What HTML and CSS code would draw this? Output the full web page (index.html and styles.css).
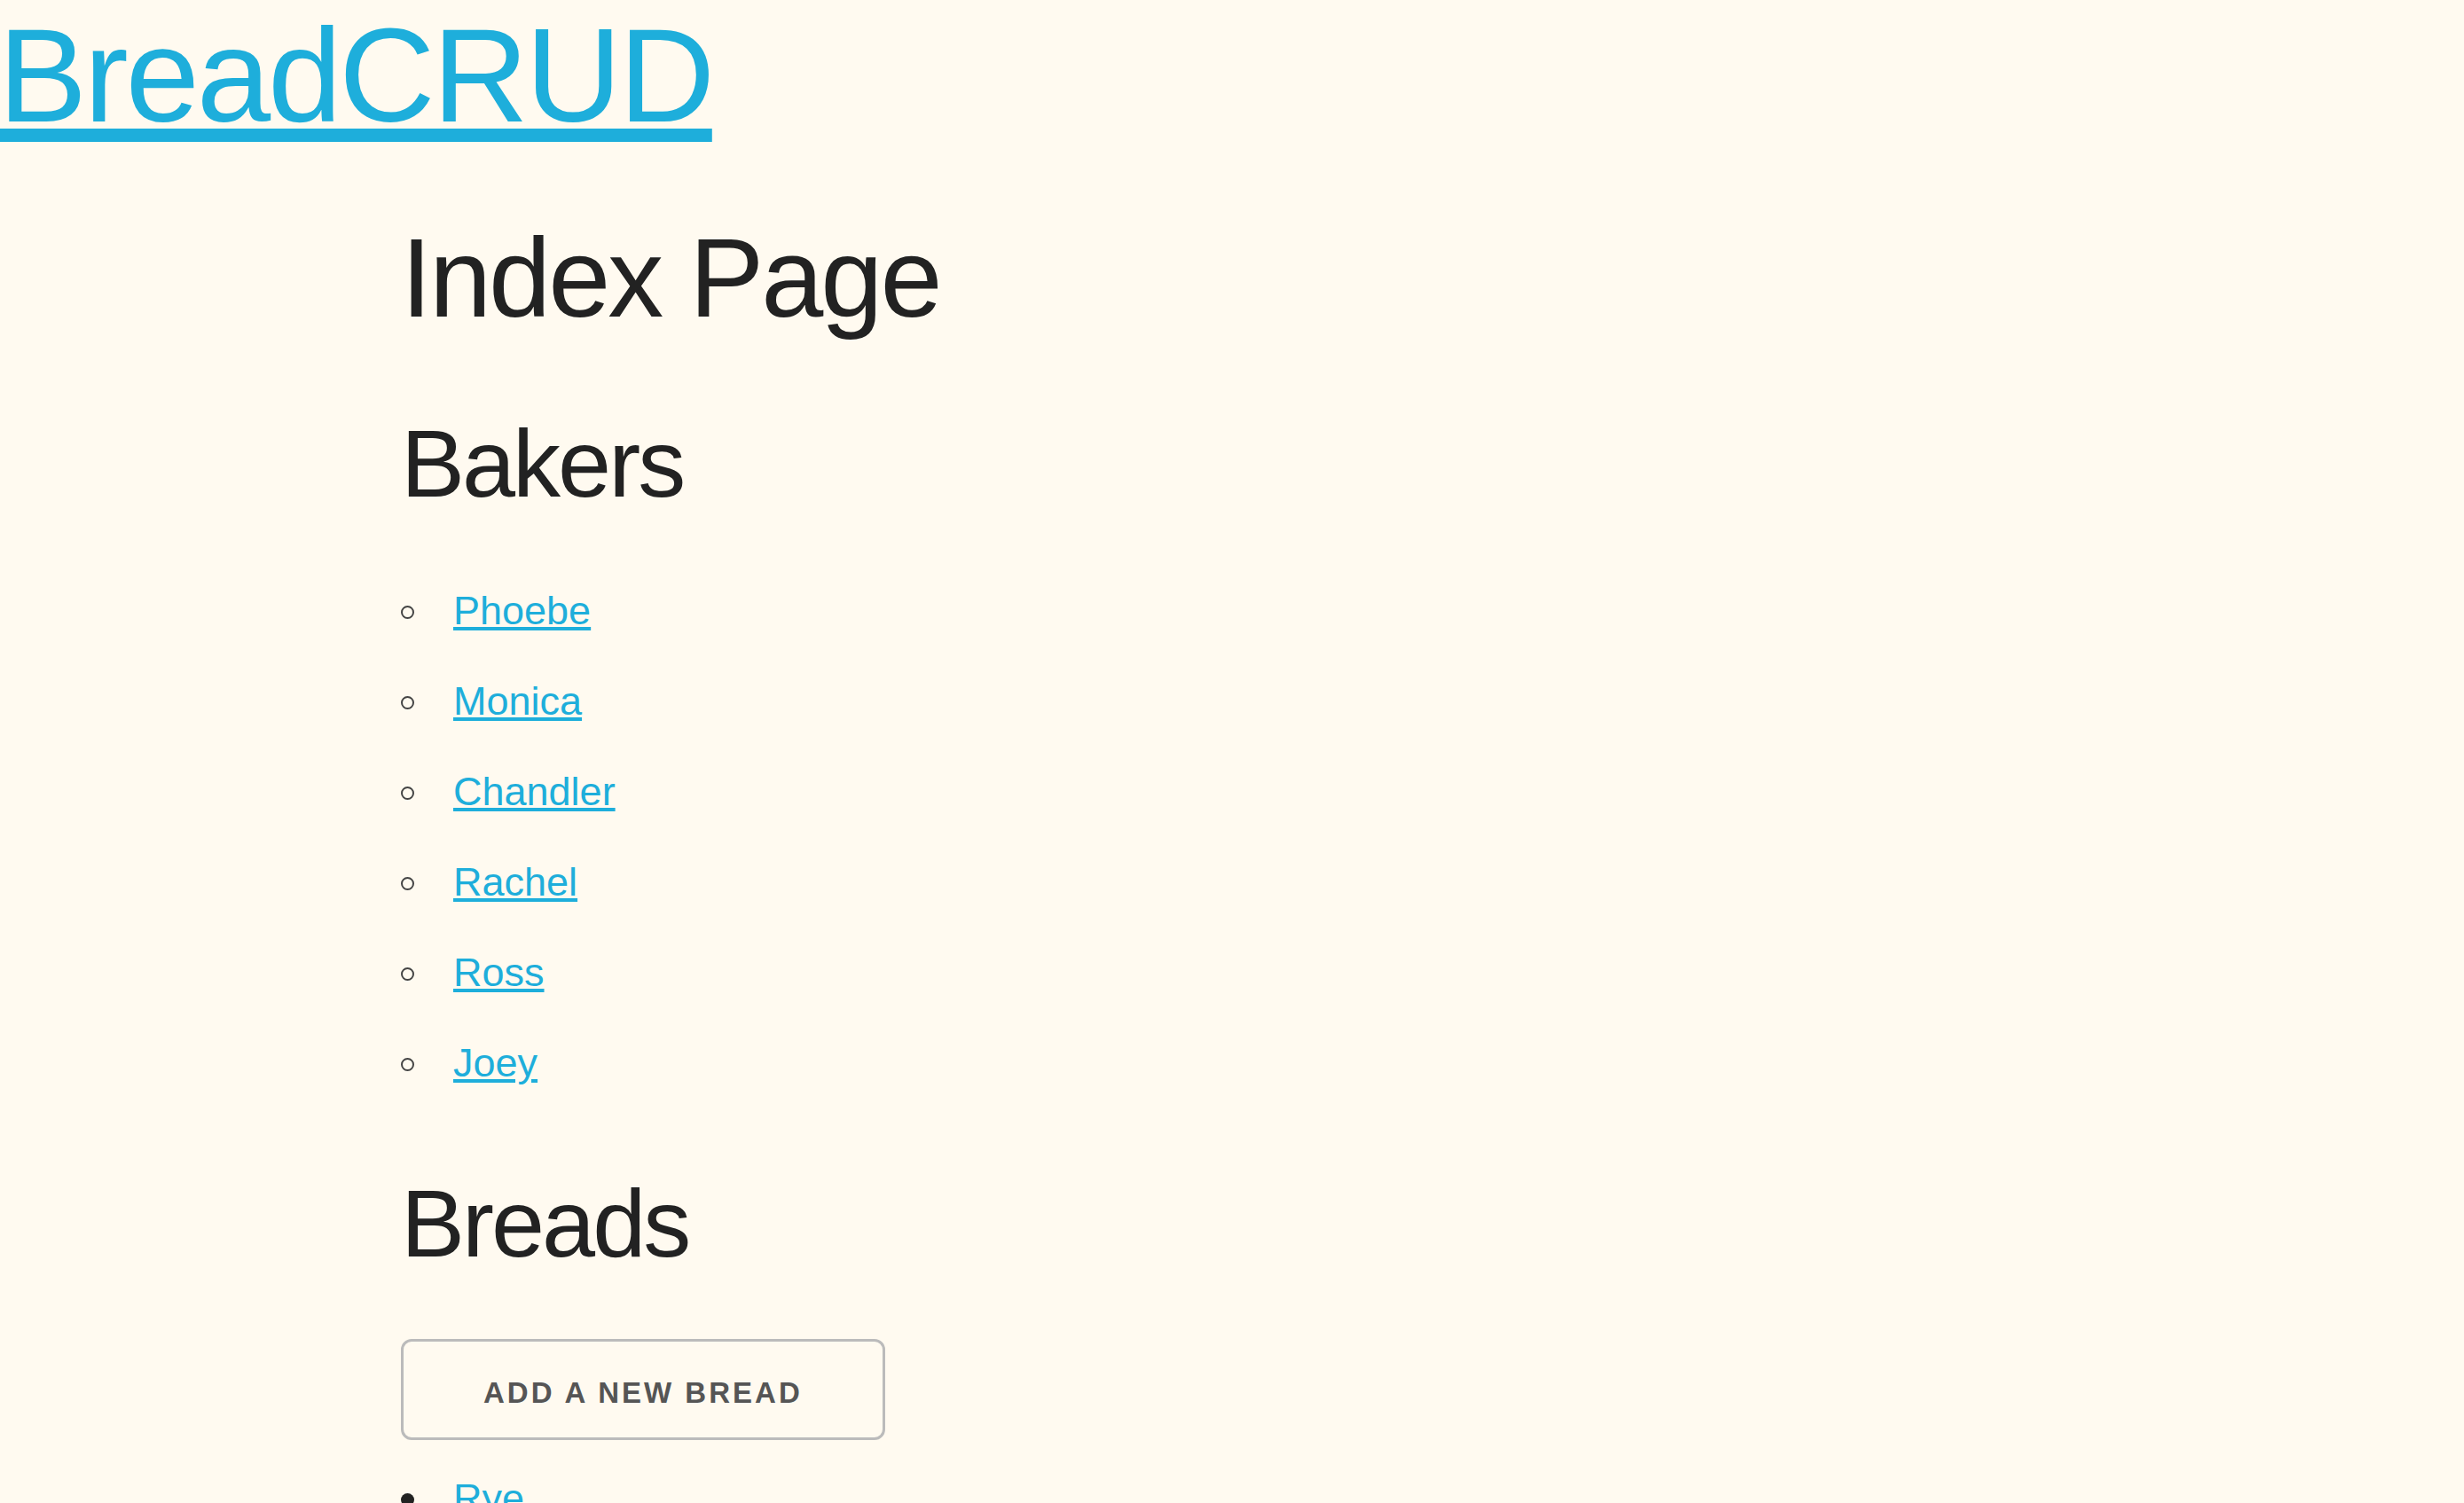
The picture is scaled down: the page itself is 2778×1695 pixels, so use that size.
FILE: index.html
```html
<!DOCTYPE html>
<html lang="en">
<head>
<meta charset="utf-8">
<title>BreadCRUD</title>
<link rel="stylesheet" href="styles.css">
</head>
<body>
<header class="site-header">
  <h1 class="brand"><a class="brand-link" href="/">BreadCRUD</a></h1>
</header>
<main class="page">
  <h2 class="page-title">Index Page</h2>

  <h3 class="section-title">Bakers</h3>
  <ul class="item-list item-list--circle">
    <li class="item"><a class="item-link" href="#">Phoebe</a></li>
    <li class="item"><a class="item-link" href="#">Monica</a></li>
    <li class="item"><a class="item-link" href="#">Chandler</a></li>
    <li class="item"><a class="item-link" href="#">Rachel</a></li>
    <li class="item"><a class="item-link" href="#">Ross</a></li>
    <li class="item"><a class="item-link" href="#">Joey</a></li>
  </ul>

  <h3 class="section-title">Breads</h3>
  <a class="button" href="#">Add a New Bread</a>
  <ul class="item-list item-list--disc">
    <li class="item"><a class="item-link" href="#">Rye</a></li>
  </ul>
</main>
</body>
</html>
```
FILE: styles.css
```css
html {
  font-size: 30px;
}

body {
  margin: 0;
  background: #fffaf0;
  color: #222222;
  font-family: "Liberation Sans", Arial, sans-serif;
  font-size: 45px;
  line-height: 1.6;
  font-weight: 400;
}

a {
  color: #1eaedb;
}

.site-header {
  margin-top: -5px;
}

.brand {
  margin: 0 0 60px -2px;
  font-size: 150px;
  line-height: 1.2;
  font-weight: 300;
  letter-spacing: -3.2px;
}

.brand-link {
  text-decoration-thickness: 15px;
  text-underline-offset: 8px;
}

.page {
  padding-left: 452px;
}

.page-title {
  margin: 0 0 60px 0;
  font-size: 126px;
  line-height: 1.25;
  font-weight: 300;
  letter-spacing: -3px;
}

.section-title {
  margin: 0 0 60px 0;
  font-size: 108px;
  line-height: 1.3;
  font-weight: 300;
  letter-spacing: -3px;
}

.item-list {
  margin: 0 0 75px 0;
  padding-left: 0;
  list-style: none;
}

.item {
  margin-bottom: 30px;
}

.item::before {
  content: "";
  display: inline-block;
  box-sizing: border-box;
  width: 15px;
  height: 15px;
  margin-right: 44px;
  margin-bottom: 4px;
  border-radius: 50%;
  vertical-align: middle;
}

.item-list--circle .item::before {
  border: 2px solid #444444;
}

.item-list--disc .item::before {
  background: #222222;
}

.item-link {
  text-decoration-thickness: 4px;
  text-underline-offset: 3px;
}

.button {
  display: inline-block;
  box-sizing: border-box;
  height: 114px;
  padding: 0 90px;
  margin-bottom: 30px;
  color: #555555;
  text-align: center;
  font-size: 33px;
  font-weight: 700;
  line-height: 116px;
  letter-spacing: 3px;
  text-transform: uppercase;
  text-decoration: none;
  white-space: nowrap;
  background-color: transparent;
  border: 3px solid #bbbbbb;
  border-radius: 12px;
}
```
